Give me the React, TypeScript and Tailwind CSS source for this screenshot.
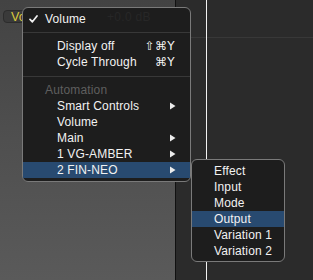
import React from "react";

const font = { fontFamily: '"Liberation Sans", "DejaVu Sans", Arial, sans-serif' };

function Arrow() {
  return (
    <svg width="6" height="8" viewBox="0 0 6 8" className="block">
      <polygon points="0,0.5 5.5,4 0,7.5" fill="#ececec" />
    </svg>
  );
}

function Check() {
  return (
    <svg width="9" height="8" viewBox="0 0 9 8" className="block">
      <path d="M1 4.3 L3.4 6.8 L8 1" stroke="#f2f2f2" strokeWidth="1.7" fill="none" strokeLinecap="round" strokeLinejoin="round" />
    </svg>
  );
}

function Item({ label, shortcut, arrow, active }: { label: string; shortcut?: string; arrow?: boolean; active?: boolean }) {
  return (
    <div className={`h-[16px] flex items-center justify-between pl-[34px] pr-[14px] text-[#f2f2f2] ${active ? "bg-[#284a70]" : ""}`}>
      <span className="tracking-[0.15px]">{label}</span>
      {shortcut && <span className="pr-[1px] tracking-[0.3px]" style={{ fontFamily: '"DejaVu Sans", "Liberation Sans", sans-serif', fontSize: 12 }}>{shortcut}</span>}
      {arrow && <Arrow />}
    </div>
  );
}

function Sep({ h }: { h: number }) {
  return (
    <div className={h === 11 ? "h-[11px] flex flex-col pt-[5px]" : "h-[12px] flex flex-col pt-[6px]"}>
      <div className="h-px bg-[#383838]" />
    </div>
  );
}

export default function App() {
  return (
    <div className="relative w-[313px] h-[280px] overflow-hidden flex text-[12px] leading-[16px]" style={font}>
      <div className="w-[175px] h-full bg-gradient-to-b from-[#434343] via-[#4f4f4f] to-[#5a5a5a] pt-[10px] pl-[3px]">
        <div className="h-[13px] w-[150px] rounded-[4px] bg-[#3a3a3a] border border-[#2c2c2c] flex items-center pl-[7px]">
          <span className="text-[#dccb3c] text-[12.5px] leading-[12px]">Vo</span>
        </div>
      </div>
      <div className="w-px h-full bg-[#111111]" />
      <div className="w-[30px] h-full bg-[#2b2b2b]">
        <div className="h-[38px] border-b border-[#383838]" />
      </div>
      <div className="w-px h-full bg-[#f2f2f2]" />
      <div className="flex-1 h-full bg-[#2b2b2b]">
        <div className="h-[38px] border-b border-[#383838]" />
      </div>

      {/* main menu */}
      <div className="absolute left-[22px] top-[7px] w-[169px] h-[175px] rounded-[6px] border border-[#7a7a7a] bg-[#1d1d1d] pt-[3px] pb-[3px]">
        <div className="absolute left-[84px] top-[1px] text-[#272727] tracking-[0.3px]">+0.0 dB</div>
        <div className="relative h-[16px] flex items-center pl-[22px] text-[#f2f2f2]">
          <div className="absolute left-[6px] top-[4px]">
            <Check />
          </div>
          <span className="tracking-[0.15px]">Volume</span>
        </div>
        <Sep h={11} />
        <Item label="Display off" shortcut="⇧⌘Y" />
        <Item label="Cycle Through" shortcut="⌘Y" />
        <Sep h={12} />
        <div className="h-[16px] flex items-center pl-[22px] text-[#5f5f5f] tracking-[0.15px]">Automation</div>
        <Item label="Smart Controls" arrow />
        <Item label="Volume" />
        <Item label="Main" arrow />
        <Item label="1 VG-AMBER" arrow />
        <Item label="2 FIN-NEO" arrow active />
      </div>

      {/* submenu */}
      <div className="absolute left-[191px] top-[159px] w-[94px] h-[103px] rounded-[6px] border border-[#7a7a7a] bg-[#1d1d1d] pt-[3px] overflow-hidden">
        {["Effect", "Input", "Mode", "Output", "Variation 1", "Variation 2"].map((t) => (
          <div key={t} className={`h-[16px] flex items-center pl-[22px] text-[#f2f2f2] tracking-[0.15px] ${t === "Output" ? "bg-[#284a70]" : ""}`}>
            {t}
          </div>
        ))}
      </div>
    </div>
  );
}
